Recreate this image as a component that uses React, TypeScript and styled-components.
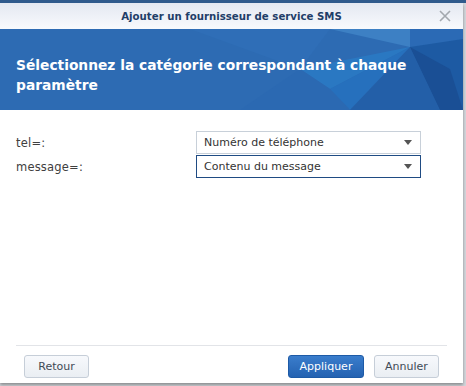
import React from "react"
import styled, { createGlobalStyle } from "styled-components"

const Global = createGlobalStyle`
    html, body {
        margin: 0;
        padding: 0;
        background: #d3d6db;
        font-family: "DejaVu Sans", Verdana, sans-serif;
    }
`

const Stage = styled.div`
    width: 466px;
    height: 386px;
    box-sizing: border-box;
    border-top: 3px solid #2f5a8c;
    background: #d3d6db;
    overflow: hidden;
`

const Dialog = styled.div`
    width: 463px;
    height: 380px;
    background: #fff;
    display: flex;
    flex-direction: column;
    box-shadow: 0 2px 3px rgba(0,0,0,0.35);
`

const TitleBar = styled.div`
    height: 26px;
    flex: none;
    position: relative;
    display: flex;
    align-items: center;
    justify-content: center;
    background: linear-gradient(#e4e8f1, #f8fafd);
    color: #1f3e68;
    font-size: 10.2px;
    font-weight: bold;
`

const Close = styled.span`
    position: absolute;
    right: 12px;
    top: 7px;
    width: 12px;
    height: 12px;
`

const Banner = styled.div`
    height: 81px;
    flex: none;
    position: relative;
    overflow: hidden;
    background: #2d6bb3;
    padding: 10px 16px 0;
    display: flex;
    align-items: center;
    box-sizing: border-box;

    h1 {
        position: relative;
        margin: 0;
        color: #fff;
        font-size: 13.8px;
        line-height: 20px;
        font-weight: bold;
    }
`

const Facets = styled.svg`
    position: absolute;
    left: 0;
    top: 0;
`

const Form = styled.div`
    flex: 1;
    padding: 21px 42px 0 16px;
    display: flex;
    flex-direction: column;
    gap: 1px;
`

const Row = styled.div`
    display: grid;
    grid-template-columns: 180px 1fr;
    align-items: center;
    font-size: 11px;
    color: #404040;

    > span {
        font-size: 11.5px;
        letter-spacing: 0.2px;
    }
`

const Select = styled.div<{ $focus?: boolean }>`
    height: 23px;
    box-sizing: border-box;
    border: 1px solid ${p => p.$focus ? "#1f4b83" : "#c8d0d9"};
    padding: 0 8px 0 7px;
    display: flex;
    align-items: center;
    justify-content: space-between;
    color: #333;

    &::after {
        content: "";
        border-left: 4.5px solid transparent;
        border-right: 4.5px solid transparent;
        border-top: 5px solid #555;
    }
`

const Footer = styled.div`
    flex: none;
    margin: 0 16px;
    border-top: 1px solid #e2e4e8;
    padding: 9px 8px 5px;
    display: flex;
    gap: 10px;
    font-size: 11px;

    .spacer {
        flex: 1;
    }
`

const Button = styled.button<{ $primary?: boolean; $w: number }>`
    width: ${p => p.$w}px;
    height: 23px;
    border-radius: 3px;
    font-family: inherit;
    font-size: 11px;
    border: 1px solid ${p => p.$primary ? "#1d5aa6" : "#c6ced8"};
    background: ${p => p.$primary
        ? "linear-gradient(#3a7dcc, #2462b1)"
        : "linear-gradient(#f7f9fc, #eaeef3)"};
    color: ${p => p.$primary ? "#fff" : "#3f4a56"};
    padding: 0;
`

const App = () => {
    return (
        <Stage>
            <Global />
            <Dialog>
                <TitleBar>
                    Ajouter un fournisseur de service SMS
                    <Close>
                        <svg width="12" height="12" viewBox="0 0 12 12">
                            <path d="M1 1L11 11M11 1L1 11" stroke="#a3a8ae" strokeWidth="1.6" />
                        </svg>
                    </Close>
                </TitleBar>
                <Banner>
                    <Facets width="463" height="81" viewBox="0 0 463 81">
                        <polygon points="190,0 330,0 300,40" fill="#2f6eb7" />
                        <polygon points="330,0 410,0 410,18" fill="#3d80c4" />
                        <polygon points="410,0 463,0 463,10 410,18" fill="#2b6ab5" />
                        <polygon points="300,40 410,18 330,60" fill="#2a78c2" />
                        <polygon points="330,60 410,18 350,81" fill="#2670bd" />
                        <polygon points="240,81 300,40 330,60 350,81" fill="#2b69b2" />
                        <polygon points="410,18 463,10 463,81 440,81" fill="#1d5aa3" />
                        <polygon points="410,18 440,81 350,81" fill="#235fa8" />
                        <polygon points="410,18 450,40 463,81 440,81" fill="#1a4f95" />
                    </Facets>
                    <h1>Sélectionnez la catégorie correspondant à chaque paramètre</h1>
                </Banner>
                <Form>
                    <Row>
                        <span>tel=:</span>
                        <Select>Numéro de téléphone</Select>
                    </Row>
                    <Row>
                        <span>message=:</span>
                        <Select $focus>Contenu du message</Select>
                    </Row>
                </Form>
                <Footer>
                    <Button $w={65}>Retour</Button>
                    <span className="spacer" />
                    <Button $primary $w={76}>Appliquer</Button>
                    <Button $w={65}>Annuler</Button>
                </Footer>
            </Dialog>
        </Stage>
    )
}

export default App
